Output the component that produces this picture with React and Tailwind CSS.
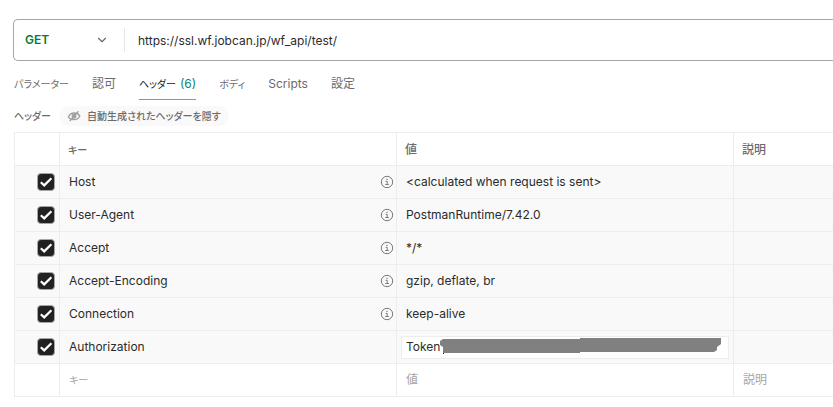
import React, { useState } from 'react';
import { ChevronDown } from 'lucide-react';

const TABS = [
  { id: 'params', label: 'パラメーター', kana: true },
  { id: 'auth', label: '認可' },
  { id: 'headers', label: 'ヘッダー', kana: true, count: 6 },
  { id: 'body', label: 'ボディ', kana: true },
  { id: 'scripts', label: 'Scripts' },
  { id: 'settings', label: '設定' },
];

const HEADERS = [
  { key: 'Host', value: '<calculated when request is sent>', auto: true },
  { key: 'User-Agent', value: 'PostmanRuntime/7.42.0', auto: true },
  { key: 'Accept', value: '*/*', auto: true },
  { key: 'Accept-Encoding', value: 'gzip, deflate, br', auto: true },
  { key: 'Connection', value: 'keep-alive', auto: true },
  { key: 'Authorization', value: 'Token', auto: false },
];

const InfoIcon = () => (
  <svg viewBox="0 0 14 14" className="size-3.5 shrink-0" fill="none" stroke="#7a7a7a" aria-hidden="true">
    <circle cx="7" cy="7" r="5.7" />
    <path d="M5.6 6.3H7.2V9.4M5.3 9.5H8.8" />
    <path d="M6.4 4.4H7.6" strokeWidth="1.2" />
  </svg>
);

const HiddenEyeIcon = () => (
  <svg viewBox="0 0 14 12" className="h-3 w-3.5 shrink-0" fill="none" stroke="#a0a0a0" strokeWidth="1.3" aria-hidden="true">
    <path d="M1.4 7C2.4 4.4 4.6 3 7 3S11.6 4 12.8 6C11.8 8.4 9.6 9.6 7 9.6S2.4 8.8 1.4 7Z" />
    <circle cx="7" cy="6.3" r="1.8" fill="#b0b0b0" />
    <path d="M2.8 11 11.4 1.2" />
  </svg>
);

// Check box with its own tick drawn on top
const RowCheckbox = ({ label }) => (
  <span className="relative block size-[18px]">
    <input
      type="checkbox"
      defaultChecked
      aria-label={label}
      className="peer block size-[18px] appearance-none rounded border border-[#a6a6a6] bg-white checked:bg-[#212121]"
    />
    <svg
      viewBox="0 0 18 18"
      className="pointer-events-none absolute inset-0 hidden peer-checked:block"
      fill="none"
      stroke="#fff"
      strokeWidth="2.2"
      aria-hidden="true"
    >
      <path d="M3.8 9.2 7.2 12.4 14.4 5.2" />
    </svg>
  </span>
);

const cell = 'h-[33px] border border-[#ededed] p-0 text-left align-middle';
const headCell = 'pl-2 pt-0.5 font-medium';
const emptyInput = 'block w-full bg-transparent pl-[9px] outline-none placeholder:text-[#a6a6a6]';

const App = () => {
  const [activeTab, setActiveTab] = useState('headers');

  return (
    <div className="overflow-x-hidden bg-white pb-2 pl-[13px] pt-[19px] font-['Inter','Noto_Sans_CJK_JP',sans-serif] text-[12px] leading-4 text-[#2b2b2b] [font-feature-settings:'palt']">
      {/* URL bar */}
      <div className="flex h-[42px] items-center rounded-l-[5px] border border-r-0 border-[#a6a6a6]">
        <div className="relative w-[111px] border-r border-[#e6e6e6]">
          <select
            aria-label="Method"
            className="block h-6 w-full appearance-none bg-transparent pl-[11px] font-semibold text-[#007f31] outline-none"
          >
            <option>GET</option>
            <option>POST</option>
          </select>
          <ChevronDown size={14} strokeWidth={2} className="pointer-events-none absolute right-[15px] top-[5px] text-[#6b6b6b]" />
        </div>
        <input
          aria-label="URL"
          defaultValue="https://ssl.wf.jobcan.jp/wf_api/test/"
          className="h-6 min-w-0 flex-1 bg-transparent pl-[13px] outline-none"
        />
      </div>

      {/* Tabs */}
      <div className="mt-3 flex gap-[23px] pl-px text-[#6b6b6b]" role="tablist">
        {TABS.map((tab) => (
          <button
            key={tab.id}
            type="button"
            role="tab"
            aria-selected={activeTab === tab.id}
            onClick={() => setActiveTab(tab.id)}
            className={`flex h-[27px] items-center gap-1 border-b pb-1 ${
              activeTab === tab.id ? 'border-[#ff6c37] text-[#212121]' : 'border-transparent'
            }`}
          >
            <span className={tab.kana ? 'text-[10px]' : ''}>{tab.label}</span>
            {tab.count && <span className="text-[#0e7f70]">({tab.count})</span>}
          </button>
        ))}
      </div>

      <div className="mt-1.5 flex items-center gap-2 pl-px text-[10px] text-[#6b6b6b]">
        <h2 className="font-medium">ヘッダー</h2>
        <button type="button" className="flex h-5 items-center gap-1.5 rounded-full bg-[#f9f9f9] px-2 font-medium">
          <HiddenEyeIcon />
          自動生成されたヘッダーを隠す
        </button>
      </div>

      {/* Header table */}
      <div className="mt-1.5 pl-px">
        <table className="w-full table-fixed border-collapse">
          <colgroup>
            <col className="w-[45px]" />
            <col className="w-[337px]" />
            <col className="w-[337px]" />
            <col />
          </colgroup>
          <thead className="text-[#6b6b6b]">
            <tr>
              <td className={cell}></td>
              <th className={`${cell} ${headCell} text-[10px]`}>キー</th>
              <th className={`${cell} ${headCell}`}>値</th>
              <th className={`${cell} ${headCell} border-r-0`}>説明</th>
            </tr>
          </thead>
          <tbody>
            {HEADERS.map((row) => (
              <tr key={row.key} className="bg-[#f9f9f9]">
                <td className={cell}>
                  <div className="flex justify-end pr-1">
                    <RowCheckbox label={row.key} />
                  </div>
                </td>
                <td className={cell}>
                  <div className="flex items-center justify-between pl-[9px] pr-0.5">
                    {row.key}
                    {row.auto && <InfoIcon />}
                  </div>
                </td>
                <td className={cell}>
                  {row.auto ? (
                    <div className="pl-[9px]">{row.value}</div>
                  ) : (
                    <div className="relative px-1">
                      <input
                        aria-label={row.key}
                        defaultValue={row.value}
                        className="block h-[23px] w-full border border-[#ededed] bg-white pb-0.5 pl-1 outline-none"
                      />
                      {/* Masked token */}
                      <svg viewBox="0 0 281 17" className="absolute left-[43px] top-0.5 h-[17px] w-[281px]" aria-hidden="true">
                        <path fill="#808080" d="M0 3 3 1H140V0H281V6L277 9V12L274 14H140V15H3V9L0 7Z" />
                        <path fill="#212121" d="M3 15h1v1H3z" />
                      </svg>
                    </div>
                  )}
                </td>
                <td className={`${cell} border-r-0`}></td>
              </tr>
            ))}
            <tr>
              <td className={cell}></td>
              <td className={cell}>
                <input aria-label="キー" placeholder="キー" className={`${emptyInput} text-[10px]`} />
              </td>
              <td className={cell}>
                <input aria-label="値" placeholder="値" className={emptyInput} />
              </td>
              <td className={`${cell} border-r-0`}>
                <input aria-label="説明" placeholder="説明" className={emptyInput} />
              </td>
            </tr>
          </tbody>
        </table>
      </div>
    </div>
  );
};

export default App;
